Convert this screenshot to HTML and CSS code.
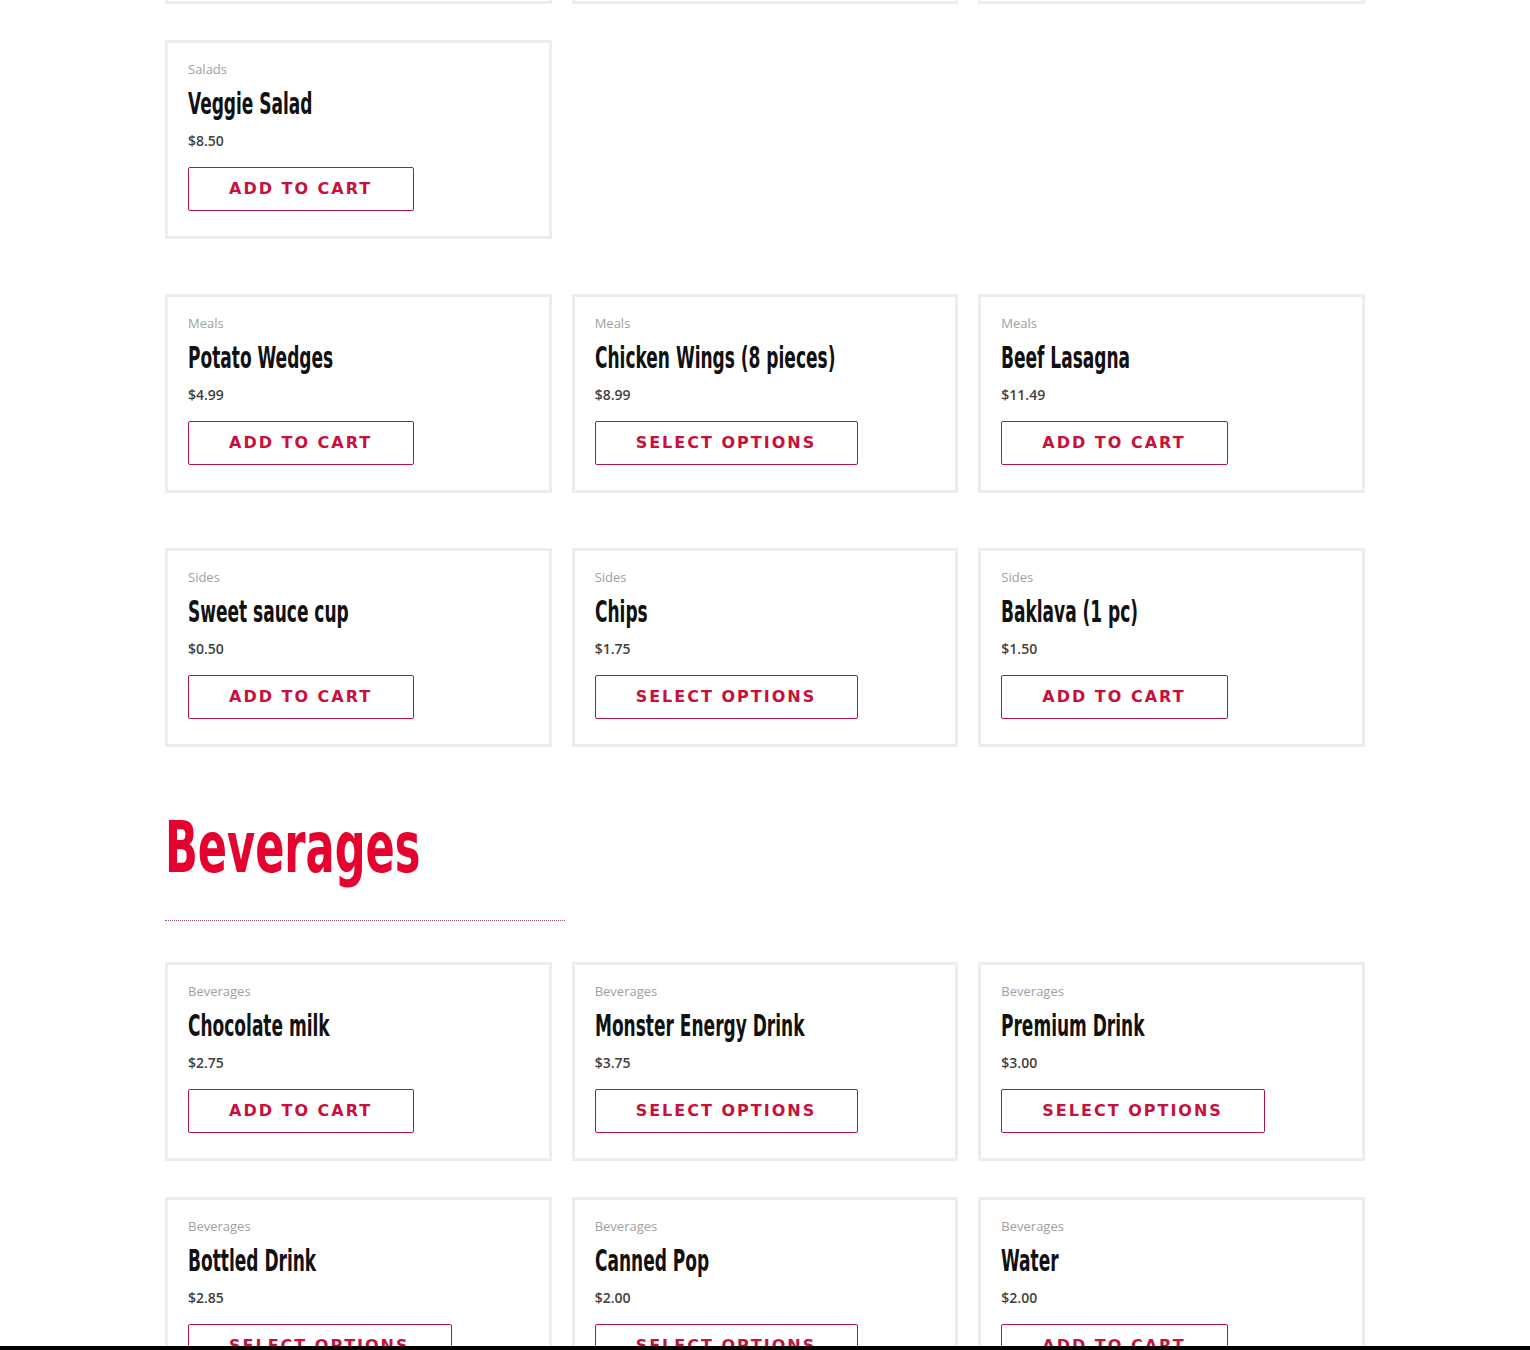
FILE: index.html
```html
<!DOCTYPE html>
<html lang="en">
<head>
<meta charset="utf-8">
<title>Menu</title>
<link rel="stylesheet" href="styles.css">
</head>
<body>
<main class="menu">
  <section class="group group-first">
    <div class="grid">
      <div class="card card-stub"></div>
      <div class="card card-stub"></div>
      <div class="card card-stub"></div>
      <article class="card"><div class="cat">Salads</div><h3 class="title"><span>Veggie Salad</span></h3><div class="price">$8.50</div><a class="btn" href="#">Add to cart</a></article>
    </div>
  </section>

  <section class="group">
    <div class="grid">
      <article class="card"><div class="cat">Meals</div><h3 class="title"><span>Potato Wedges</span></h3><div class="price">$4.99</div><a class="btn" href="#">Add to cart</a></article>
      <article class="card"><div class="cat">Meals</div><h3 class="title"><span>Chicken Wings (8 pieces)</span></h3><div class="price">$8.99</div><a class="btn" href="#">Select options</a></article>
      <article class="card"><div class="cat">Meals</div><h3 class="title"><span>Beef Lasagna</span></h3><div class="price">$11.49</div><a class="btn" href="#">Add to cart</a></article>
    </div>
  </section>

  <section class="group">
    <div class="grid">
      <article class="card"><div class="cat">Sides</div><h3 class="title"><span>Sweet sauce cup</span></h3><div class="price">$0.50</div><a class="btn" href="#">Add to cart</a></article>
      <article class="card"><div class="cat">Sides</div><h3 class="title"><span>Chips</span></h3><div class="price">$1.75</div><a class="btn" href="#">Select options</a></article>
      <article class="card"><div class="cat">Sides</div><h3 class="title"><span>Baklava (1 pc)</span></h3><div class="price">$1.50</div><a class="btn" href="#">Add to cart</a></article>
    </div>
  </section>

  <section class="category">
    <h2 class="cat-heading"><span>Beverages</span></h2>
    <div class="divider"></div>
    <div class="grid grid-bev">
      <article class="card"><div class="cat">Beverages</div><h3 class="title"><span>Chocolate milk</span></h3><div class="price">$2.75</div><a class="btn" href="#">Add to cart</a></article>
      <article class="card"><div class="cat">Beverages</div><h3 class="title"><span>Monster Energy Drink</span></h3><div class="price">$3.75</div><a class="btn" href="#">Select options</a></article>
      <article class="card"><div class="cat">Beverages</div><h3 class="title"><span>Premium Drink</span></h3><div class="price">$3.00</div><a class="btn" href="#">Select options</a></article>
      <article class="card"><div class="cat">Beverages</div><h3 class="title"><span>Bottled Drink</span></h3><div class="price">$2.85</div><a class="btn" href="#">Select options</a></article>
      <article class="card"><div class="cat">Beverages</div><h3 class="title"><span>Canned Pop</span></h3><div class="price">$2.00</div><a class="btn" href="#">Select options</a></article>
      <article class="card"><div class="cat">Beverages</div><h3 class="title"><span>Water</span></h3><div class="price">$2.00</div><a class="btn" href="#">Add to cart</a></article>
    </div>
  </section>
</main>
<div class="bottom-bar"></div>
</body>
</html>
```

FILE: styles.css
```css
* { box-sizing: border-box; }

html, body {
  margin: 0;
  padding: 0;
  background: #ffffff;
}

body {
  font-family: "Open Sans", "Noto Sans", sans-serif;
  color: #333;
}

.menu {
  width: 1200px;
  margin: 0 auto;
  padding-bottom: 200px;
}

.group { margin-top: 55px; }
.group-first { margin-top: -194px; }

.grid {
  display: grid;
  grid-template-columns: repeat(3, minmax(0, 1fr));
  column-gap: 20px;
  row-gap: 36px;
}

.card {
  border: 3px solid #ededed;
  padding: 18px 20px 25px;
  background: #fff;
  display: flex;
  flex-direction: column;
  align-items: flex-start;
  min-width: 0;
}

.card-stub { height: 198px; }

.cat {
  font-family: "Open Sans", "Noto Sans", sans-serif;
  font-size: 13px;
  line-height: 16px;
  color: #a0a0a0;
}

.title {
  margin: 8px 0 0;
  font-family: "DejaVu Sans Condensed", "DejaVu Sans", sans-serif;
  font-stretch: condensed;
  font-weight: 700;
  font-size: 31px;
  line-height: 36px;
  color: #111;
  white-space: nowrap;
}

.title span {
  display: inline-block;
  transform: scaleX(0.61);
  transform-origin: left center;
}

.price {
  margin-top: 11px;
  font-family: "Open Sans", "Noto Sans", sans-serif;
  font-weight: 600;
  font-size: 14px;
  line-height: 18px;
  color: #3f3f3f;
}

.btn {
  margin-top: 17px;
  display: inline-block;
  border: 1px solid #b3163f;
  border-radius: 2px;
  padding: 0 41px 0 40px;
  height: 44px;
  line-height: 42px;
  font-family: "DejaVu Sans", sans-serif;
  font-weight: 700;
  font-size: 16px;
  letter-spacing: 2px;
  text-transform: uppercase;
  color: #c8103a;
  text-decoration: none;
  white-space: nowrap;
}

.category { margin-top: 60px; }

.cat-heading {
  margin: 0;
  font-family: "DejaVu Sans Condensed", "DejaVu Sans", sans-serif;
  font-stretch: condensed;
  font-weight: 700;
  font-size: 72px;
  line-height: 80px;
  color: #e4032e;
  white-space: nowrap;
}

.cat-heading span {
  display: inline-block;
  transform: scaleX(0.665);
  transform-origin: left center;
}

.divider {
  width: 400px;
  margin-top: 33px;
  margin-bottom: 41px;
  border-top: 1px dotted #a8536a;
}

.bottom-bar {
  position: fixed;
  left: 0;
  right: 0;
  bottom: 0;
  height: 4px;
  background: #000;
}
```
